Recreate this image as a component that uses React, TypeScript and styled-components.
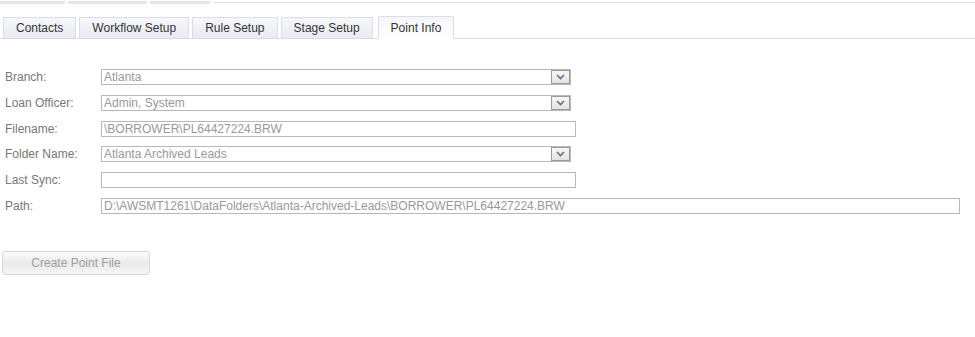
import React from 'react';
import styled, { createGlobalStyle } from 'styled-components';

const GlobalStyle = createGlobalStyle`
  html, body {
    margin: 0;
    padding: 0;
    background: #fff;
    font-family: Arial, "Liberation Sans", sans-serif;
    font-size: 12px;
  }
`;

const TopStrip = styled.div`
  display: flex;
  align-items: flex-end;
  height: 4px;
`;

const StubTab = styled.div<{ w: number }>`
  width: ${(p) => p.w}px;
  height: 3px;
  margin-right: 3px;
  background: #e4e6ef;
`;

const StubLine = styled.div`
  flex: 1;
  height: 1px;
  margin-bottom: 1px;
  background: #e0e0ea;
`;

const TabBar = styled.div`
  display: flex;
  align-items: flex-end;
  gap: 3px;
  margin-top: 12px;
  padding-left: 3px;
  border-bottom: 1px solid #dcdce6;
  height: 22px;
`;

const Tab = styled.div<{ active?: boolean }>`
  box-sizing: border-box;
  padding: 0 12px;
  margin-left: ${(p) => (p.active ? '2px' : '0')};
  margin-bottom: ${(p) => (p.active ? '-1px' : '0')};
  height: ${(p) => (p.active ? 23 : 21)}px;
  display: flex;
  align-items: center;
  border: 1px solid #dcdde6;
  border-bottom: ${(p) => (p.active ? '1px solid #fff' : 'none')};
  background: ${(p) => (p.active ? 'linear-gradient(#f4f6fb, #ffffff)' : 'linear-gradient(#f6f7fa, #e9ebf1)')};
  color: #333;
  font-size: 12px;
`;

const Form = styled.div`
  display: grid;
  grid-template-columns: 96px auto;
  row-gap: 9.8px;
  padding: 30px 0 0 5px;
  align-items: center;
`;

const Label = styled.div`
  color: #777;
  font-size: 12px;
`;

const Field = styled.div<{ w: number }>`
  width: ${(p) => p.w}px;
  height: 16px;
  box-sizing: border-box;
  border: 1px solid #b8b8b8;
  display: flex;
  align-items: center;
  color: #999;
  padding-left: 2px;
  font-size: 12px;
  background: #fff;
`;

const Value = styled.span`
  flex: 1;
  white-space: nowrap;
  overflow: hidden;
`;

const DropButton = styled.div`
  width: 19px;
  height: 14px;
  box-sizing: border-box;
  border: 1px solid #9a9a9a;
  background: linear-gradient(#f7f7f7, #e3e3e3);
  display: flex;
  align-items: center;
  justify-content: center;
`;

const ActionButton = styled.button`
  margin: 37px 0 0 2px;
  width: 148px;
  height: 24px;
  border: 1px solid #d6d6d6;
  border-radius: 3px;
  background: linear-gradient(#fbfbfb, #eaeaea 50%, #f6f6f6);
  color: #a0a0a0;
  font-family: Arial, "Liberation Sans", sans-serif;
  font-size: 12px;
  padding: 0;
`;

const Chevron = () => (
  <svg width="9" height="6" viewBox="0 0 9 6">
    <path d="M1 1 L4.5 4.5 L8 1" fill="none" stroke="#5a6f96" strokeWidth="1.6" />
  </svg>
);

type Row = { label: string; value: string; w: number; select?: boolean };

const rows: Row[] = [
  { label: 'Branch:', value: 'Atlanta', w: 470, select: true },
  { label: 'Loan Officer:', value: 'Admin, System', w: 470, select: true },
  { label: 'Filename:', value: '\\BORROWER\\PL64427224.BRW', w: 475 },
  { label: 'Folder Name:', value: 'Atlanta Archived Leads', w: 470, select: true },
  { label: 'Last Sync:', value: '', w: 475 },
  {
    label: 'Path:',
    value: 'D:\\AWSMT1261\\DataFolders\\Atlanta-Archived-Leads\\BORROWER\\PL64427224.BRW',
    w: 859,
  },
];

export default function App() {
  return (
    <>
      <GlobalStyle />
      <TopStrip>
        <StubTab w={65} />
        <StubTab w={79} />
        <StubTab w={60} />
        <StubLine />
      </TopStrip>
      <TabBar>
        <Tab>Contacts</Tab>
        <Tab>Workflow Setup</Tab>
        <Tab>Rule Setup</Tab>
        <Tab>Stage Setup</Tab>
        <Tab active>Point Info</Tab>
      </TabBar>
      <Form>
        {rows.map((r) => (
          <React.Fragment key={r.label}>
            <Label>{r.label}</Label>
            <Field w={r.w}>
              <Value>{r.value}</Value>
              {r.select && (
                <DropButton>
                  <Chevron />
                </DropButton>
              )}
            </Field>
          </React.Fragment>
        ))}
      </Form>
      <ActionButton>Create Point File</ActionButton>
    </>
  );
}
